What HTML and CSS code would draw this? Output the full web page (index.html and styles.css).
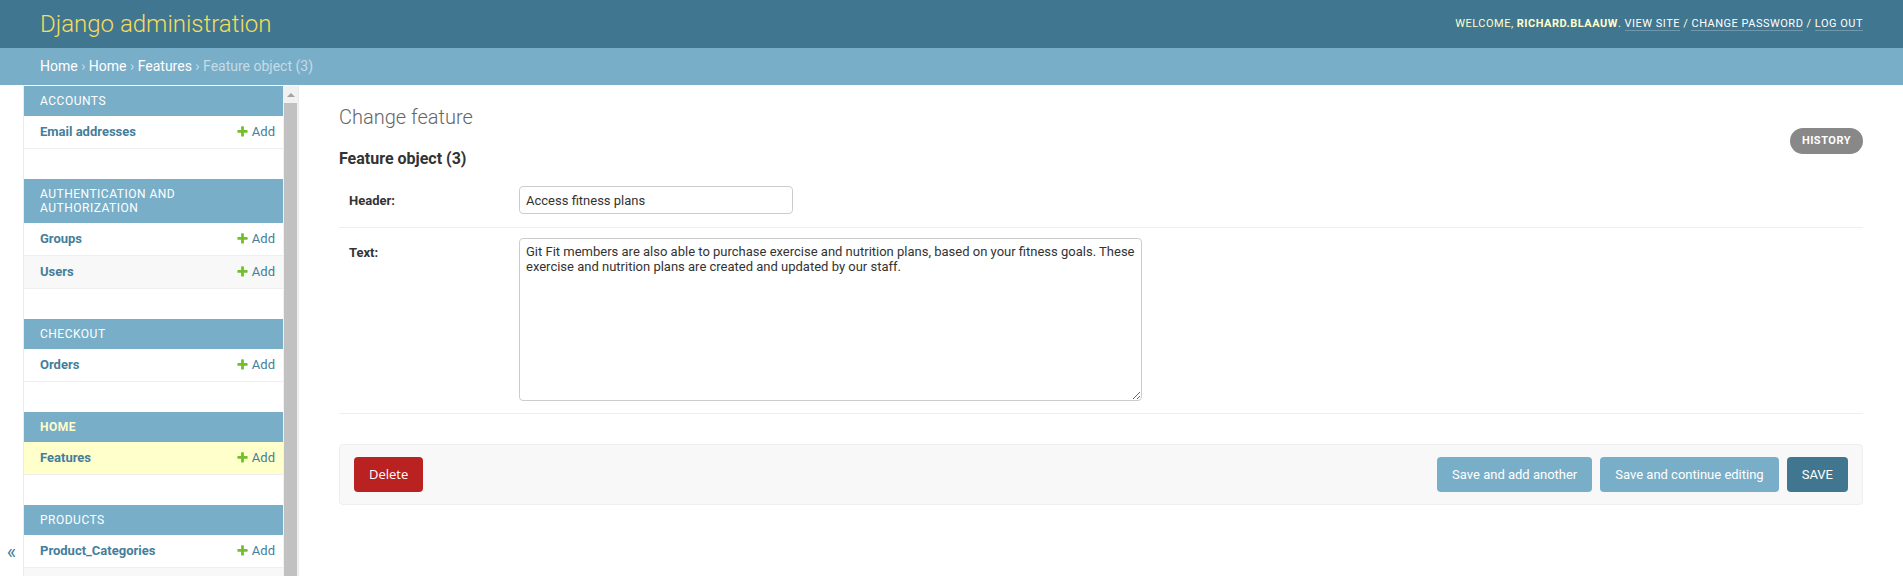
FILE: index.html
```html
<!DOCTYPE html>
<html lang="en">
<head>
<meta charset="utf-8">
<title>Change feature | Django site admin</title>
<link rel="stylesheet" href="styles.css">
</head>
<body>
<div class="container">
  <header class="header">
    <h1 class="site-name"><a href="#">Django administration</a></h1>
    <div class="user-tools">Welcome, <strong>richard.blaauw</strong>. <a href="#">View site</a> / <a href="#">Change password</a> / <a href="#">Log out</a></div>
  </header>
  <div class="breadcrumbs"><a href="#">Home</a> › <a href="#">Home</a> › <a href="#">Features</a> › Feature object (3)</div>
  <div class="main">
    <div class="toggle-nav">«</div>
    <nav class="nav-sidebar">
      <div class="nav-modules">
        <div class="module">
          <div class="caption">Accounts</div>
          <div class="model-row"><a class="model-name" href="#">Email addresses</a><a class="addlink" href="#"><svg width="13" height="13" viewBox="0 0 1792 1792"><path fill="#70bf2b" d="M1600 796v192q0 40-28 68t-68 28h-416v416q0 40-28 68t-68 28h-192q-40 0-68-28t-28-68v-416h-416q-40 0-68-28t-28-68v-192q0-40 28-68t68-28h416v-416q0-40 28-68t68-28h192q40 0 68 28t28 68v416h416q40 0 68 28t28 68z"/></svg>Add</a></div>
        </div>
        <div class="module">
          <div class="caption">Authentication and Authorization</div>
          <div class="model-row"><a class="model-name" href="#">Groups</a><a class="addlink" href="#"><svg width="13" height="13" viewBox="0 0 1792 1792"><path fill="#70bf2b" d="M1600 796v192q0 40-28 68t-68 28h-416v416q0 40-28 68t-68 28h-192q-40 0-68-28t-28-68v-416h-416q-40 0-68-28t-28-68v-192q0-40 28-68t68-28h416v-416q0-40 28-68t68-28h192q40 0 68 28t28 68v416h416q40 0 68 28t28 68z"/></svg>Add</a></div>
          <div class="model-row"><a class="model-name" href="#">Users</a><a class="addlink" href="#"><svg width="13" height="13" viewBox="0 0 1792 1792"><path fill="#70bf2b" d="M1600 796v192q0 40-28 68t-68 28h-416v416q0 40-28 68t-68 28h-192q-40 0-68-28t-28-68v-416h-416q-40 0-68-28t-28-68v-192q0-40 28-68t68-28h416v-416q0-40 28-68t68-28h192q40 0 68 28t28 68v416h416q40 0 68 28t28 68z"/></svg>Add</a></div>
        </div>
        <div class="module">
          <div class="caption">Checkout</div>
          <div class="model-row"><a class="model-name" href="#">Orders</a><a class="addlink" href="#"><svg width="13" height="13" viewBox="0 0 1792 1792"><path fill="#70bf2b" d="M1600 796v192q0 40-28 68t-68 28h-416v416q0 40-28 68t-68 28h-192q-40 0-68-28t-28-68v-416h-416q-40 0-68-28t-28-68v-192q0-40 28-68t68-28h416v-416q0-40 28-68t68-28h192q40 0 68 28t28 68v416h416q40 0 68 28t28 68z"/></svg>Add</a></div>
        </div>
        <div class="module">
          <div class="caption current">Home</div>
          <div class="model-row current-model"><a class="model-name" href="#">Features</a><a class="addlink" href="#"><svg width="13" height="13" viewBox="0 0 1792 1792"><path fill="#70bf2b" d="M1600 796v192q0 40-28 68t-68 28h-416v416q0 40-28 68t-68 28h-192q-40 0-68-28t-28-68v-416h-416q-40 0-68-28t-28-68v-192q0-40 28-68t68-28h416v-416q0-40 28-68t68-28h192q40 0 68 28t28 68v416h416q40 0 68 28t28 68z"/></svg>Add</a></div>
        </div>
        <div class="module">
          <div class="caption">Products</div>
          <div class="model-row"><a class="model-name" href="#">Product_Categories</a><a class="addlink" href="#"><svg width="13" height="13" viewBox="0 0 1792 1792"><path fill="#70bf2b" d="M1600 796v192q0 40-28 68t-68 28h-416v416q0 40-28 68t-68 28h-192q-40 0-68-28t-28-68v-416h-416q-40 0-68-28t-28-68v-192q0-40 28-68t68-28h416v-416q0-40 28-68t68-28h192q40 0 68 28t28 68v416h416q40 0 68 28t28 68z"/></svg>Add</a></div>
          <div class="model-row empty-row"></div>
        </div>
      </div>
      <div class="scrollbar">
        <div class="sb-button"><span class="sb-arrow"></span></div>
        <div class="sb-thumb"></div>
      </div>
    </nav>
    <div class="content">
      <h1 class="title">Change feature</h1>
      <div class="subtitle-row">
        <h2 class="subtitle">Feature object (3)</h2>
        <ul class="object-tools"><li><a class="history" href="#">History</a></li></ul>
      </div>
      <form class="change-form">
        <fieldset class="fieldset">
          <div class="form-row">
            <label class="field-label" for="id_header">Header:</label>
            <input class="text-input" type="text" id="id_header" value="Access fitness plans">
          </div>
          <div class="form-row">
            <label class="field-label" for="id_text">Text:</label>
            <textarea class="text-area" id="id_text">Git Fit members are also able to purchase exercise and nutrition plans, based on your fitness goals. These exercise and nutrition plans are created and updated by our staff.</textarea>
          </div>
        </fieldset>
        <div class="submit-row">
          <a class="deletelink" href="#">Delete</a>
          <button class="btn" type="button">Save and add another</button>
          <button class="btn" type="button">Save and continue editing</button>
          <button class="btn default" type="button">SAVE</button>
        </div>
      </form>
    </div>
  </div>
</div>
</body>
</html>
```

FILE: styles.css
```css
html, body {
  margin: 0;
  padding: 0;
  height: 100%;
  overflow: hidden;
}
body {
  font-family: Roboto, "Liberation Sans", Arial, sans-serif;
  font-size: 14px;
  color: #333;
  background: #fff;
}
a {
  color: #447e9b;
  text-decoration: none;
}

/* header */
.header {
  box-sizing: border-box;
  height: 48px;
  display: flex;
  justify-content: space-between;
  align-items: center;
  padding: 0 40px;
  background: #417690;
  color: #ffc;
}
.site-name {
  margin: 0;
  font-size: 24px;
  font-weight: 300;
  line-height: 28px;
}
.site-name a {
  color: #f5dd5d;
}
.user-tools {
  font-size: 11px;
  font-weight: 400;
  letter-spacing: 0.5px;
  text-transform: uppercase;
  padding-bottom: 1px;
}
.user-tools strong {
  font-weight: 700;
}
.user-tools a {
  color: #fff;
  border-bottom: 1px solid rgba(255, 255, 255, 0.25);
}

/* breadcrumbs */
.breadcrumbs {
  box-sizing: border-box;
  height: 37px;
  padding: 10px 40px;
  background: #79aec8;
  color: #c4dce8;
  font-size: 14px;
  line-height: 17px;
}
.breadcrumbs a {
  color: #fff;
}

/* main */
.main {
  display: flex;
  height: calc(100vh - 85px);
}
.toggle-nav {
  box-sizing: border-box;
  flex: 0 0 24px;
  border-right: 1px solid #eaeaea;
  background: #fff;
  display: flex;
  flex-direction: column;
  justify-content: flex-end;
  align-items: center;
  padding-bottom: 12px;
  font-size: 20px;
  line-height: 23px;
  color: #447e9b;
}
.nav-sidebar {
  box-sizing: border-box;
  flex: 0 0 275px;
  display: flex;
  border-top: 1px solid transparent;
  border-right: 1px solid #eaeaea;
  overflow: hidden;
}
.nav-modules {
  flex: 1;
  min-width: 0;
}
.module {
  margin-bottom: 30px;
}
.caption {
  padding: 8px 8px 8px 16px;
  background: #79aec8;
  color: #fff;
  font-size: 12px;
  line-height: 14px;
  letter-spacing: 0.5px;
  text-transform: uppercase;
}
.caption.current {
  color: #ffc;
  font-weight: 700;
}
.model-row {
  display: flex;
  justify-content: space-between;
  border-bottom: 1px solid #eee;
  font-size: 13px;
  line-height: 16px;
}
.model-row:nth-child(odd) {
  background: #f8f8f8;
}
.model-row.current-model {
  background: #ffc;
}
.empty-row {
  height: 32px;
}
.model-name {
  padding: 8px 8px 8px 16px;
  font-weight: 700;
}
.addlink {
  display: flex;
  align-items: flex-start;
  padding: 8px;
  white-space: nowrap;
}
.addlink svg {
  display: block;
  margin: 1px 3px 0 0;
}
.scrollbar {
  flex: 0 0 15px;
  display: flex;
  flex-direction: column;
  background: #f1f1f1;
}
.sb-button {
  height: 17px;
  display: flex;
  justify-content: center;
  align-items: center;
}
.sb-arrow {
  width: 0;
  height: 0;
  border-left: 4px solid transparent;
  border-right: 4px solid transparent;
  border-bottom: 4px solid #a3a3a3;
}
.sb-thumb {
  flex: 1;
  margin: 0 1px;
  background: #c1c1c1;
}

/* content */
.content {
  flex: 1;
  min-width: 0;
  padding: 20px 40px;
}
.title {
  margin: 0 0 20px;
  font-size: 20px;
  font-weight: 300;
  line-height: 24px;
  color: #666;
}
.subtitle-row {
  display: flex;
  justify-content: space-between;
  align-items: flex-start;
}
.subtitle {
  margin: 0 0 8px;
  font-size: 16px;
  line-height: 19px;
  font-weight: 700;
  color: #333;
}
.object-tools {
  list-style: none;
  margin: -21px 0 0;
  padding: 0;
  display: flex;
}
.history {
  display: block;
  height: 26px;
  line-height: 26px;
  padding: 0 12px;
  border-radius: 15px;
  background: #888;
  color: #fff;
  font-size: 11px;
  font-weight: 700;
  letter-spacing: 0.5px;
  text-transform: uppercase;
}
.change-form {
  margin: 0;
}
.fieldset {
  margin: 0 0 30px;
  padding: 0;
  border: none;
  min-width: 0;
}
.form-row {
  display: flex;
  align-items: flex-start;
  padding: 10px;
  border-bottom: 1px solid #eee;
  font-size: 13px;
}
.field-label {
  flex: 0 0 170px;
  padding-top: 7px;
  line-height: 16px;
  font-weight: 700;
  color: #333;
}
.text-input, .text-area {
  box-sizing: border-box;
  margin: 0 0 3px;
  padding: 5px 6px;
  border: 1px solid #ccc;
  border-radius: 4px;
  font-family: Roboto, "Liberation Sans", Arial, sans-serif;
  font-size: 13px;
  color: #333;
  background: #fff;
}
.text-input {
  width: 274px;
  height: 28px;
}
.text-area {
  width: 623px;
  height: 163px;
  margin-bottom: 2px;
  line-height: 15px;
}
.submit-row {
  display: flex;
  align-items: center;
  gap: 8px;
  padding: 12px 14px;
  margin: 0 0 20px;
  background: #f8f8f8;
  border: 1px solid #eee;
  border-radius: 4px;
}
.deletelink {
  margin-right: auto;
  height: 35px;
  line-height: 35px;
  padding: 0 15px;
  border-radius: 4px;
  background: #ba2121;
  color: #fff;
  font-family: "Open Sans", "Liberation Sans", sans-serif;
  font-size: 13px;
}
.btn {
  height: 35px;
  padding: 0 15px;
  border: none;
  border-radius: 4px;
  background: #79aec8;
  color: #fff;
  font-family: Roboto, "Liberation Sans", Arial, sans-serif;
  font-size: 13px;
  cursor: pointer;
}
.btn.default {
  background: #417690;
}
```
